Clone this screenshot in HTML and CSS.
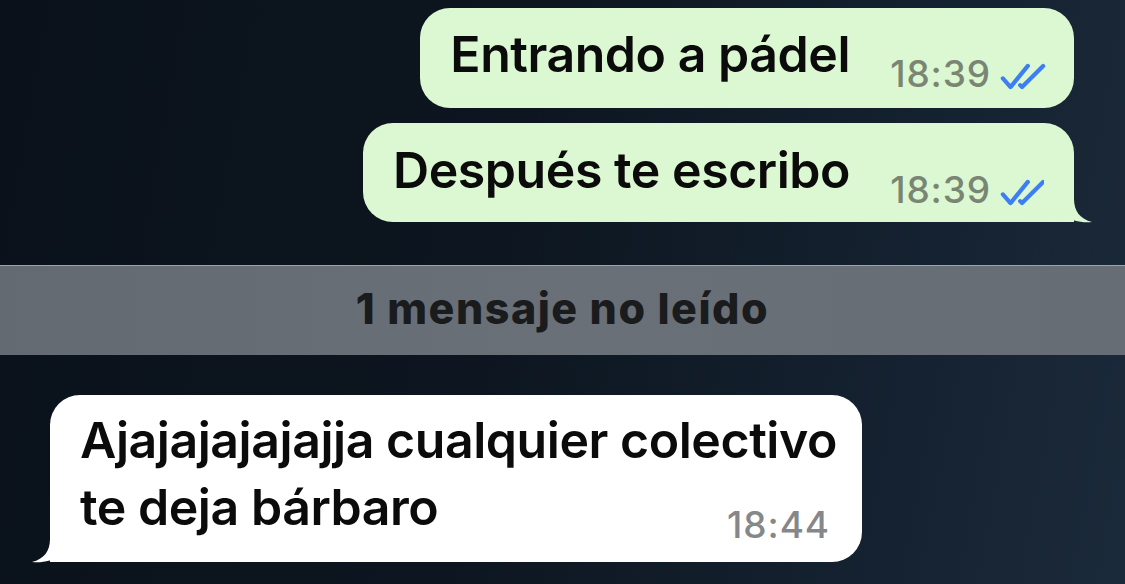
FILE: index.html
```html
<!DOCTYPE html>
<html lang="es">
<head>
<meta charset="utf-8">
<title>Chat</title>
<link rel="stylesheet" href="styles.css">
</head>
<body>
<main class="chat">
  <div class="row row-out first">
    <div class="bubble out">
      <span class="text">Entrando a pádel</span>
      <span class="meta"><span class="time">18:39</span>
        <svg class="ticks" viewBox="0 0 48 30" width="46" height="29"><path d="M3 17 L11 26 L29 4" fill="none" stroke="#3d7ff2" stroke-width="4.4" stroke-linecap="round" stroke-linejoin="round"/><path d="M21 24 L23 26 L45 4" fill="none" stroke="#3d7ff2" stroke-width="4.4" stroke-linecap="round" stroke-linejoin="round"/></svg>
      </span>
    </div>
  </div>
  <div class="row row-out second">
    <div class="bubble out tail-right">
      <span class="text">Después te escribo</span>
      <span class="meta"><span class="time">18:39</span>
        <svg class="ticks" viewBox="0 0 48 30" width="46" height="29"><path d="M3 17 L11 26 L29 4" fill="none" stroke="#3d7ff2" stroke-width="4.4" stroke-linecap="round" stroke-linejoin="round"/><path d="M21 24 L23 26 L45 4" fill="none" stroke="#3d7ff2" stroke-width="4.4" stroke-linecap="round" stroke-linejoin="round"/></svg>
      </span>
      <svg class="tail tail-r" viewBox="0 0 50 52" width="50" height="52"><path d="M0 0 H30 V28 C30 40 36 48 48 51 C38 52 27 50 19 44 C14 49 8 51 0 51 Z" fill="#dcf8d2"/></svg>
    </div>
  </div>
  <div class="unread"><span>1 mensaje no leído</span></div>
  <div class="row row-in">
    <div class="bubble in tail-left">
      <span class="text">Ajajajajajajja cualquier colectivo<br>te deja bárbaro</span>
      <span class="meta"><span class="time">18:44</span></span>
      <svg class="tail tail-l" viewBox="0 0 50 52" width="50" height="52"><path d="M50 0 H20 V28 C20 40 14 48 2 51 C12 52 23 50 31 44 C36 49 42 51 50 51 Z" fill="#ffffff"/></svg>
    </div>
  </div>
</main>
</body>
</html>
```

FILE: styles.css
```css
* { box-sizing: border-box; }
html, body { margin: 0; padding: 0; }
body {
  width: 1125px;
  height: 584px;
  overflow: hidden;
  background: linear-gradient(100deg, #0a111a 0%, #0d1620 45%, #152231 80%, #1b2a3a 100%);
  font-family: Inter, "Noto Sans", sans-serif;
}
.chat {
  display: flex;
  flex-direction: column;
  padding-top: 8px;
}
.row { display: flex; }
.row-out { justify-content: flex-end; padding-right: 51px; }
.row-out.second { margin-top: 15px; }
.row-in { padding-left: 50px; margin-top: 40px; }

.bubble {
  position: relative;
  display: flex;
  border-radius: 30px;
  color: #0b0b0b;
}
.bubble.out {
  background: #dcf8d2;
  height: 100px;
  padding: 13px 28px 0 30px;
  align-items: flex-start;
}
.bubble.tail-right { border-bottom-right-radius: 0; height: 99px; padding-top: 14px; }
.bubble.in {
  background: #ffffff;
  flex-direction: column;
  padding: 12px 32px 0 30px;
  border-bottom-left-radius: 0;
  width: 812px;
  height: 167px;
}
.text {
  font-size: 50px;
  font-weight: 560;
  line-height: 66px;
  letter-spacing: -0.45px;
  white-space: nowrap;
}
.bubble.in .text { line-height: 67px; }
.meta {
  display: flex;
  align-items: center;
  margin-left: 40px;
  margin-top: 31px;
  height: 44px;
}
.bubble.in .meta { margin: -38px 0 0 0; align-self: flex-end; }
.time {
  font-size: 37px;
  font-weight: 500;
  line-height: 44px;
  color: #7a8574;
  letter-spacing: 0.9px;
}
.bubble.in .time { color: #858789; }
.ticks { margin-left: 9px; margin-top: 4px; }
.tail { position: absolute; bottom: -1px; }
.tail-r { right: -20px; }
.tail-l { left: -20px; }

.unread {
  margin-top: 43px;
  height: 90px;
  display: flex;
  align-items: center;
  justify-content: center;
  background: linear-gradient(90deg, #646a71 0%, #6a7077 50%, #676d74 100%);
  border-top: 1px solid #9ea3a8;
}
.unread span {
  font-size: 43px;
  font-weight: 800;
  color: #1a1b1d;
  letter-spacing: 1.5px;
  margin-top: -6px;
}
```
